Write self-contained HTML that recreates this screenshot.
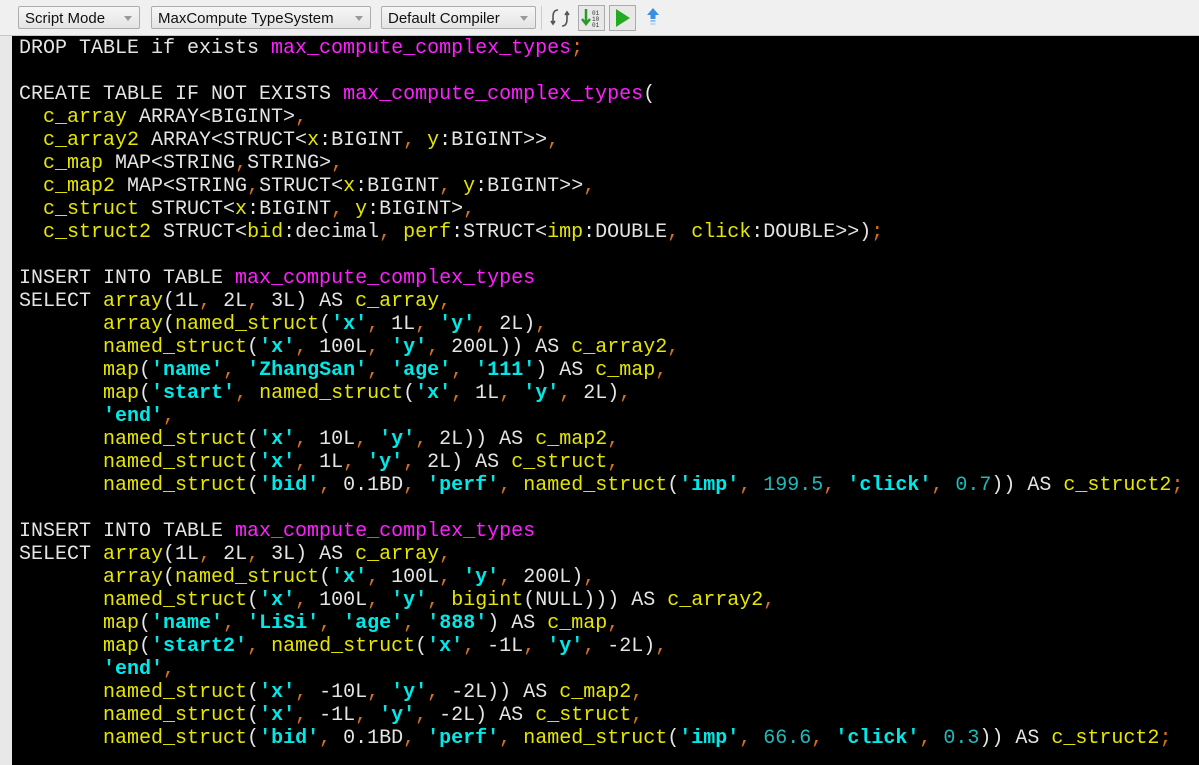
<!DOCTYPE html>
<html><head><meta charset="utf-8"><style>
body{margin:0;width:1199px;height:765px;overflow:hidden;background:#000;font-family:"Liberation Sans",sans-serif}
#tb{position:absolute;left:0;top:0;width:1199px;height:35px;background:#f0f0f0;border-bottom:1px solid #c8c8c8}
.dd{position:absolute;top:6px;height:23px;border:1px solid #adadad;border-radius:2px;background:linear-gradient(#f6f6f6,#e4e4e4);font-size:15px;line-height:23px;padding-left:6px;box-sizing:border-box;color:#111}
.dd:after{content:"";position:absolute;right:7px;top:9px;border:4px solid transparent;border-top:5px solid #999}
#gut{position:absolute;left:0;top:36px;width:12px;height:729px;background:#e8e8e8}
pre{position:absolute;left:19px;top:37px;margin:0;font-family:"Liberation Mono",monospace;font-size:20px;line-height:23px;color:#e4e4e4}
.t{color:#ff20ff}.f{color:#e6e600}.s{color:#00e8e8;font-weight:bold}.p{color:#d87020}.n{color:#20b8b8}
</style></head><body>
<div id="tb">
<div class="dd" style="left:18px;width:122px">Script Mode</div>
<div class="dd" style="left:151px;width:220px">MaxCompute TypeSystem</div>
<div class="dd" style="left:381px;width:155px">Default Compiler</div>
<div style="position:absolute;left:541px;top:6px;width:1px;height:24px;background:#ccc"></div>
<svg style="position:absolute;left:549px;top:7px" width="22" height="22" viewBox="0 0 22 22" fill="none" stroke="#555" stroke-width="1.6"><path d="M9 3C5 3 4 6 4 10v6M2 14l2 3 2-3M13 19c4 0 5-3 5-7V6M16 8l2-3 2 3"/></svg>
<div style="position:absolute;left:578px;top:5px;width:27px;height:26px;border:1px solid #aaa;background:#e8e8e8;box-sizing:border-box"><svg width="25" height="24" viewBox="0 0 25 24"><path d="M7 3v14M3 13l4 5 4-5" stroke="#2a9a2a" stroke-width="2.5" fill="none"/><text x="13" y="9" font-size="6" fill="#333" font-family="Liberation Mono">01</text><text x="13" y="15" font-size="6" fill="#333" font-family="Liberation Mono">10</text><text x="13" y="21" font-size="6" fill="#333" font-family="Liberation Mono">01</text></svg></div>
<div style="position:absolute;left:609px;top:5px;width:27px;height:26px;border:1px solid #aaa;background:#e8e8e8;box-sizing:border-box"><svg width="25" height="24"><path d="M6 3l14 9-14 9z" fill="#22aa22"/></svg></div>
<svg style="position:absolute;left:644px;top:6px" width="18" height="22"><path d="M9 2l6 7h-3.5v4h-5V9H3z" fill="#3a8fe0"/><rect x="6.5" y="14" width="5" height="2" fill="#8ec0f0"/><rect x="6.5" y="17" width="5" height="2" fill="#b8d8f8"/></svg>
</div>
<div id="gut"></div>
<pre>DROP TABLE if exists <span class="t">max_compute_complex_types</span><span class="p">;</span>

CREATE TABLE IF NOT EXISTS <span class="t">max_compute_complex_types</span>(
  <span class="f">c_array</span> ARRAY&lt;BIGINT&gt;<span class="p">,</span>
  <span class="f">c_array2</span> ARRAY&lt;STRUCT&lt;<span class="f">x</span>:BIGINT<span class="p">,</span> <span class="f">y</span>:BIGINT&gt;&gt;<span class="p">,</span>
  <span class="f">c_map</span> MAP&lt;STRING<span class="p">,</span>STRING&gt;<span class="p">,</span>
  <span class="f">c_map2</span> MAP&lt;STRING<span class="p">,</span>STRUCT&lt;<span class="f">x</span>:BIGINT<span class="p">,</span> <span class="f">y</span>:BIGINT&gt;&gt;<span class="p">,</span>
  <span class="f">c_struct</span> STRUCT&lt;<span class="f">x</span>:BIGINT<span class="p">,</span> <span class="f">y</span>:BIGINT&gt;<span class="p">,</span>
  <span class="f">c_struct2</span> STRUCT&lt;<span class="f">bid</span>:decimal<span class="p">,</span> <span class="f">perf</span>:STRUCT&lt;<span class="f">imp</span>:DOUBLE<span class="p">,</span> <span class="f">click</span>:DOUBLE&gt;&gt;)<span class="p">;</span>

INSERT INTO TABLE <span class="t">max_compute_complex_types</span>
SELECT <span class="f">array</span>(1L<span class="p">,</span> 2L<span class="p">,</span> 3L) AS <span class="f">c_array</span><span class="p">,</span>
       <span class="f">array</span>(<span class="f">named_struct</span>(<span class="s">'x'</span><span class="p">,</span> 1L<span class="p">,</span> <span class="s">'y'</span><span class="p">,</span> 2L)<span class="p">,</span>
       <span class="f">named_struct</span>(<span class="s">'x'</span><span class="p">,</span> 100L<span class="p">,</span> <span class="s">'y'</span><span class="p">,</span> 200L)) AS <span class="f">c_array2</span><span class="p">,</span>
       <span class="f">map</span>(<span class="s">'name'</span><span class="p">,</span> <span class="s">'ZhangSan'</span><span class="p">,</span> <span class="s">'age'</span><span class="p">,</span> <span class="s">'111'</span>) AS <span class="f">c_map</span><span class="p">,</span>
       <span class="f">map</span>(<span class="s">'start'</span><span class="p">,</span> <span class="f">named_struct</span>(<span class="s">'x'</span><span class="p">,</span> 1L<span class="p">,</span> <span class="s">'y'</span><span class="p">,</span> 2L)<span class="p">,</span>
       <span class="s">'end'</span><span class="p">,</span>
       <span class="f">named_struct</span>(<span class="s">'x'</span><span class="p">,</span> 10L<span class="p">,</span> <span class="s">'y'</span><span class="p">,</span> 2L)) AS <span class="f">c_map2</span><span class="p">,</span>
       <span class="f">named_struct</span>(<span class="s">'x'</span><span class="p">,</span> 1L<span class="p">,</span> <span class="s">'y'</span><span class="p">,</span> 2L) AS <span class="f">c_struct</span><span class="p">,</span>
       <span class="f">named_struct</span>(<span class="s">'bid'</span><span class="p">,</span> 0.1BD<span class="p">,</span> <span class="s">'perf'</span><span class="p">,</span> <span class="f">named_struct</span>(<span class="s">'imp'</span><span class="p">,</span> <span class="n">199.5</span><span class="p">,</span> <span class="s">'click'</span><span class="p">,</span> <span class="n">0.7</span>)) AS <span class="f">c_struct2</span><span class="p">;</span>

INSERT INTO TABLE <span class="t">max_compute_complex_types</span>
SELECT <span class="f">array</span>(1L<span class="p">,</span> 2L<span class="p">,</span> 3L) AS <span class="f">c_array</span><span class="p">,</span>
       <span class="f">array</span>(<span class="f">named_struct</span>(<span class="s">'x'</span><span class="p">,</span> 100L<span class="p">,</span> <span class="s">'y'</span><span class="p">,</span> 200L)<span class="p">,</span>
       <span class="f">named_struct</span>(<span class="s">'x'</span><span class="p">,</span> 100L<span class="p">,</span> <span class="s">'y'</span><span class="p">,</span> <span class="f">bigint</span>(NULL))) AS <span class="f">c_array2</span><span class="p">,</span>
       <span class="f">map</span>(<span class="s">'name'</span><span class="p">,</span> <span class="s">'LiSi'</span><span class="p">,</span> <span class="s">'age'</span><span class="p">,</span> <span class="s">'888'</span>) AS <span class="f">c_map</span><span class="p">,</span>
       <span class="f">map</span>(<span class="s">'start2'</span><span class="p">,</span> <span class="f">named_struct</span>(<span class="s">'x'</span><span class="p">,</span> -1L<span class="p">,</span> <span class="s">'y'</span><span class="p">,</span> -2L)<span class="p">,</span>
       <span class="s">'end'</span><span class="p">,</span>
       <span class="f">named_struct</span>(<span class="s">'x'</span><span class="p">,</span> -10L<span class="p">,</span> <span class="s">'y'</span><span class="p">,</span> -2L)) AS <span class="f">c_map2</span><span class="p">,</span>
       <span class="f">named_struct</span>(<span class="s">'x'</span><span class="p">,</span> -1L<span class="p">,</span> <span class="s">'y'</span><span class="p">,</span> -2L) AS <span class="f">c_struct</span><span class="p">,</span>
       <span class="f">named_struct</span>(<span class="s">'bid'</span><span class="p">,</span> 0.1BD<span class="p">,</span> <span class="s">'perf'</span><span class="p">,</span> <span class="f">named_struct</span>(<span class="s">'imp'</span><span class="p">,</span> <span class="n">66.6</span><span class="p">,</span> <span class="s">'click'</span><span class="p">,</span> <span class="n">0.3</span>)) AS <span class="f">c_struct2</span><span class="p">;</span></pre>
</body></html>
